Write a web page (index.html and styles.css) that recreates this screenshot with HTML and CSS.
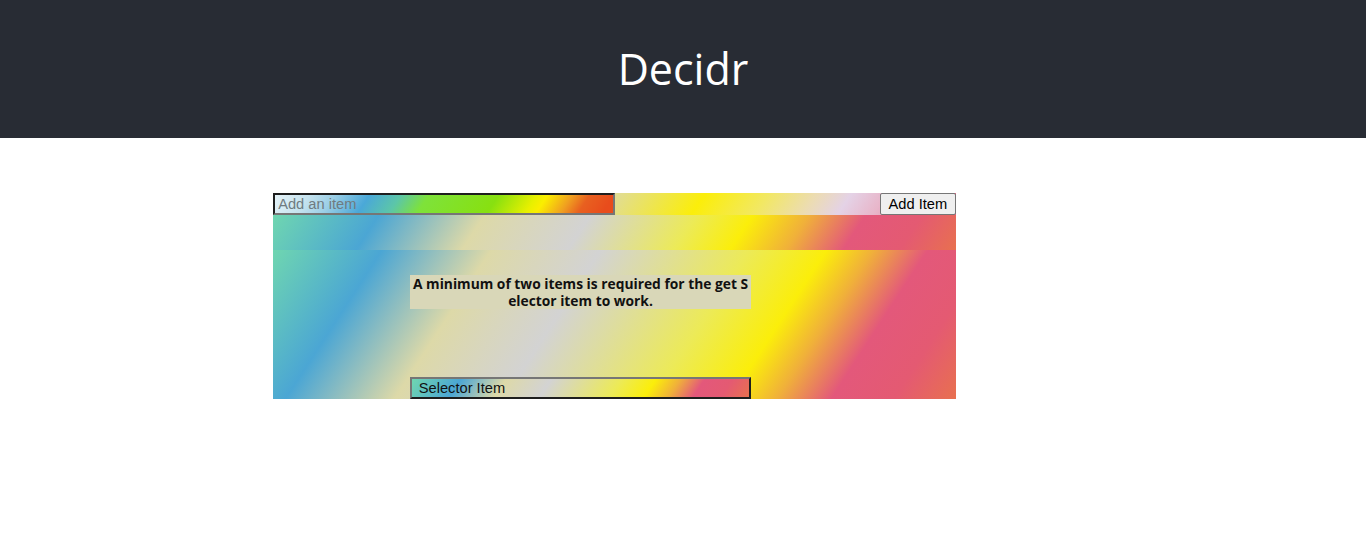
FILE: index.html
```html
<!DOCTYPE html>
<html lang="en">
<head>
<meta charset="utf-8">
<title>Decidr</title>
<link rel="stylesheet" href="styles.css">
</head>
<body>
  <header class="app-header">
    <h1 class="app-title">Decidr</h1>
  </header>
  <main class="app">
    <form class="add-form">
      <input class="add-input" type="text" placeholder="Add an item">
      <button class="add-button" type="button">Add Item</button>
    </form>
    <div class="spacer-strip"></div>
    <section class="selector-area">
      <p class="notice">A minimum of two items is required for the get Selector item to work.</p>
      <div class="selector-item">Selector Item</div>
    </section>
  </main>
</body>
</html>
```

FILE: styles.css
```css
html, body {
  margin: 0;
  padding: 0;
  background: #ffffff;
}

body {
  font-family: "Liberation Sans", Arial, sans-serif;
  font-size: 14.67px;
}

.app-header {
  background: #282c34;
  height: 138px;
  display: flex;
  align-items: center;
  justify-content: center;
}

.app-title {
  margin: 0;
  color: #ffffff;
  font-family: "Open Sans", "Noto Sans", sans-serif;
  font-weight: 400;
  font-size: 43px;
  line-height: 1;
  padding-bottom: 2px;
}

.app {
  margin: 55px 0 0 20%;
  width: 50%;
}

.add-form {
  margin: 0;
  height: 22px;
  display: flex;
  justify-content: space-between;
  background: linear-gradient(123deg, #6fd6b0 0%, #4ba6d4 14%, #ddd9a8 30%, #d6d6c6 42%, #e2dd8e 50%, #fbee0a 62%, #f2e862 71%, #ecdcb2 78%, #e4d2e6 83%, #e8b6ca 88%, #e4587b 100%);
}

.add-input {
  box-sizing: border-box;
  width: 50%;
  height: 22px;
  margin: 0;
  padding: 1px 3px;
  border-style: solid;
  border-width: 2px;
  border-color: #1e1e1e #767676 #767676 #1e1e1e;
  font-family: "Liberation Sans", Arial, sans-serif;
  font-size: 14.67px;
  color: #000;
  outline: none;
  background: linear-gradient(123deg, #e6f3f8 0%, #c4e2ee 10%, #9ccfe6 17%, #4aa8d8 27%, #5cc6a8 36%, #7ee23a 44%, #88e010 64%, #e8f000 75%, #fbee00 78%, #f0a020 85%, #e86020 90%, #e84c1c 97%, #e84c1c 100%);
}

.add-input::placeholder {
  color: #6f7b80;
}

.add-button {
  box-sizing: border-box;
  height: 22px;
  margin: 0;
  padding: 1px 8px;
  background: #efefef;
  border: 1px solid #767676;
  border-radius: 2px;
  font-family: "Liberation Sans", Arial, sans-serif;
  font-size: 14.67px;
  color: #000;
}

.spacer-strip {
  height: 35px;
  background: linear-gradient(123deg, #6fd6b0 0%, #4ba6d4 15%, #ddd9a8 30%, #d3d3d3 45%, #ecea58 60%, #fbee0a 68%, #f0b03a 76%, #e3587b 84%, #e45a72 92%, #e8704f 100%);
}

.selector-area {
  box-sizing: border-box;
  height: 149px;
  padding-top: 25px;
  display: flex;
  flex-direction: column;
  justify-content: space-between;
  background: linear-gradient(123deg, #6fd6b0 0%, #4ba6d4 14%, #ddd9a8 28%, #d3d3d3 42%, #ecea58 61%, #fbee0a 71%, #f0b03a 77%, #e3587b 84%, #e45a72 92%, #e8704f 100%);
}

.notice {
  margin: 0 0 0 20%;
  width: 50%;
  background: #d9d7b8;
  color: #111;
  font-family: "Open Sans", "Noto Sans", sans-serif;
  font-weight: 700;
  font-size: 13.8px;
  line-height: 17px;
  text-align: center;
  word-break: break-all;
}

.selector-item {
  box-sizing: border-box;
  margin-left: 20%;
  width: 50%;
  height: 22px;
  padding: 0 7px;
  border-style: solid;
  border-width: 2px;
  border-color: #767676 #1e1e1e #1e1e1e #767676;
  line-height: 18px;
  color: #111;
  background: linear-gradient(123deg, #6fd6b0 0%, #4ba6d4 14%, #ddd9a8 27%, #d3d3d3 40%, #ecea58 60%, #fbee0a 70%, #f0b03a 77%, #e3587b 84%, #e45a72 92%, #e8704f 100%);
}
```
